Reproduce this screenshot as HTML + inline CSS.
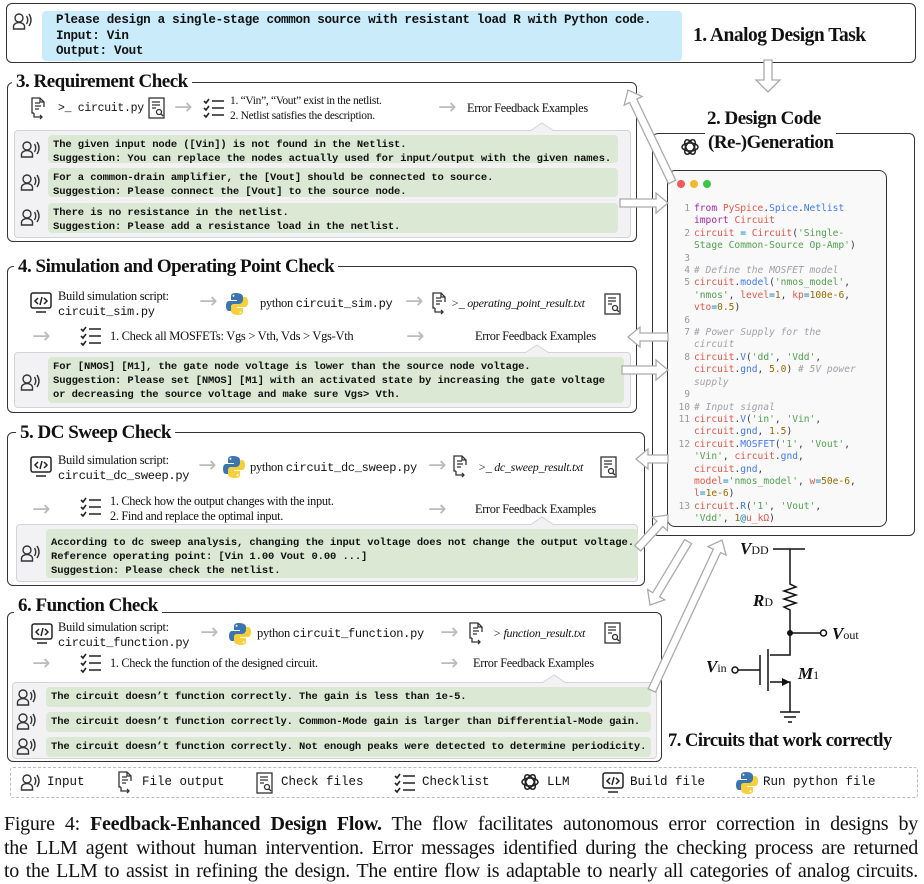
<!DOCTYPE html>
<html><head><meta charset="utf-8">
<style>
*{margin:0;padding:0;box-sizing:border-box}
body{width:924px;height:881px;background:#fff;position:relative;overflow:hidden;font-family:"Liberation Serif",serif;color:#111}
.a{position:absolute}
.box{position:absolute;border:1.3px solid #333;border-radius:6px;background:#fff}
.title{position:absolute;font-weight:bold;font-size:19px;background:#fff;padding:0 4px;letter-spacing:-0.5px;white-space:nowrap;line-height:20px}
.gray{position:absolute;background:#f2f2f4;border:1px solid #d4d4d8;border-radius:4px}
.green{position:absolute;background:#dbe8d4;border-radius:4px;font-family:"Liberation Mono",monospace;font-weight:bold;font-size:10.5px;line-height:14px;padding:3px 5px;white-space:pre;color:#111;letter-spacing:-0.1px}
.s{position:absolute;font-size:12.5px;white-space:nowrap;line-height:15px;letter-spacing:-0.3px}
.m{font-family:"Liberation Mono",monospace;font-size:12px}
.ar{position:absolute;color:#bbb;font-size:22px;line-height:20px;font-family:"DejaVu Sans",sans-serif}
.code{position:absolute;left:672px;top:203px;font-family:"DejaVu Sans Mono",monospace;font-size:9.6px;line-height:12.4px;white-space:pre;color:#383a42}
.n{color:#999;display:inline-block;width:22px;text-align:right;padding-right:4px}
.k{color:#a626a4}.r{color:#e45649}.b{color:#4078f2}.g{color:#50a14f}.o{color:#986801}.c{color:#a0a1a7;font-style:italic}.t{color:#0184bc}
.leg{position:absolute;top:775px;font-family:"Liberation Mono",monospace;font-size:12.5px;white-space:nowrap}
.cap{position:absolute;left:4px;width:914px;font-size:20px;line-height:23.5px;text-align:justify;text-align-last:justify;white-space:nowrap;letter-spacing:-0.25px}
</style></head><body>
<svg width="0" height="0" style="position:absolute">
<defs>
<g id="per" fill="none" stroke="#333" stroke-width="1.4"><circle cx="7" cy="6" r="4"/><path d="M1.5 17v-2.5a5.5 4 0 0 1 11 0V17z"/><path d="M14.5 4q2.5 4 0 8M17 2q4 6 0 12"/></g>
<g id="fo" fill="none" stroke="#333" stroke-width="1.3"><path d="M4 16H2V1h8l4 4v5"/><path d="M10 1v4h4"/><path d="M5 6h5M5 9h6M5 12h4"/><path d="M4 16v4h8M10 18l2 2-2 2"/></g>
<g id="cf" fill="none" stroke="#333" stroke-width="1.3"><rect x="1" y="1" width="15" height="20"/><path d="M4 5h8M4 8h8M4 11h4"/><circle cx="11" cy="15" r="2.5"/><path d="M13 17l2 2"/></g>
<g id="cl" fill="none" stroke="#222" stroke-width="1.6"><path d="M1 3l2 2 3-4M1 10l2 2 3-4M1 17l2 2 3-4"/><path d="M9 3h12M9 10h12M9 17h12"/></g>
<g id="bd" fill="none" stroke="#222" stroke-width="1.5"><rect x="1" y="1" width="20" height="15" rx="2"/><path d="M6 20h10"/><path d="M8 6l-3 3 3 3M14 6l3 3-3 3M12 5l-2 8"/></g>
<g id="py"><path d="M10 1c-5 0-5 2-5 4v3h6v1H3c-2 0-3 2-3 5s1 5 3 5h2v-3c0-2 2-4 4-4h5c2 0 3-1 3-3V5c0-2-2-4-7-4z" fill="#3a75b0"/><circle cx="7.5" cy="3.8" r="1" fill="#fff"/><path d="M12 23c5 0 5-2 5-4v-3h-6v-1h8c2 0 3-2 3-5s-1-5-3-5h-2v3c0 2-2 4-4 4H8c-2 0-3 1-3 3v4c0 2 2 4 7 4z" fill="#f7cf3c"/><circle cx="14.5" cy="20.2" r="1" fill="#fff"/></g>
<g id="ai" fill="none" stroke="#222" stroke-width="1.5"><ellipse cx="10" cy="10" rx="8" ry="4"/><ellipse cx="10" cy="10" rx="8" ry="4" transform="rotate(60 10 10)"/><ellipse cx="10" cy="10" rx="8" ry="4" transform="rotate(120 10 10)"/></g>
</defs></svg>

<!-- top task -->
<div class="box" style="left:6px;top:3px;width:910px;height:60px"></div>
<div class="a" style="left:42px;top:11px;width:640px;height:50px;background:#c9ebfa;border-radius:4px"></div>
<svg class="a" style="left:12px;top:12px" width="20" height="20"><use href="#per"/></svg>
<div class="a" style="left:56px;top:13px;font-family:'Liberation Mono',monospace;font-weight:bold;font-size:12.6px;line-height:15.5px;white-space:pre;letter-spacing:-0.3px">Please design a single-stage common source with resistant load R with Python code.
Input: Vin
Output: Vout</div>
<div class="a" style="left:693px;top:25px;font-weight:bold;font-size:19.5px;letter-spacing:-0.5px;white-space:nowrap">1. Analog Design Task</div>

<!-- section 3 -->
<div class="box" style="left:7px;top:82px;width:630px;height:160px"></div>
<div class="title" style="left:12px;top:72px">3. Requirement Check</div>
<svg class="a" style="left:30px;top:97px" width="18" height="24"><use href="#fo"/></svg>
<div class="s m" style="left:58px;top:101px;font-size:11.5px">&gt;_ circuit.py</div>
<svg class="a" style="left:148px;top:97px" width="18" height="23"><use href="#cf"/></svg>
<div class="ar" style="left:174px;top:98px">→</div>
<svg class="a" style="left:203px;top:98px" width="24" height="22"><use href="#cl"/></svg>
<div class="s" style="left:230px;top:94px;font-size:11.5px">1. “Vin”, “Vout” exist in the netlist.<br>2. Netlist satisfies the description.</div>
<div class="ar" style="left:438px;top:98px">→</div>
<div class="s" style="left:467px;top:101px;font-size:12.3px">Error Feedback Examples</div>
<div class="gray" style="left:14px;top:130px;width:617px;height:108px"></div>
<svg class="a" style="left:530px;top:122px" width="24" height="10"><path d="M0 9L12 1 24 9" fill="#f2f2f4" stroke="#d4d4d8"/></svg>
<svg class="a" style="left:20px;top:140px" width="20" height="20"><use href="#per"/></svg>
<div class="green" style="left:48px;top:135px;width:570px;height:28px">The given input node ([Vin]) is not found in the Netlist.
Suggestion: You can replace the nodes actually used for input/output with the given names.</div>
<svg class="a" style="left:20px;top:173px" width="20" height="20"><use href="#per"/></svg>
<div class="green" style="left:48px;top:168px;width:570px;height:29px">For a common-drain amplifier, the [Vout] should be connected to source.
Suggestion: Please connect the [Vout] to the source node.</div>
<svg class="a" style="left:20px;top:208px" width="20" height="20"><use href="#per"/></svg>
<div class="green" style="left:48px;top:203px;width:570px;height:30px">There is no resistance in the netlist.
Suggestion: Please add a resistance load in the netlist.</div>

<!-- section 4 -->
<div class="box" style="left:7px;top:266px;width:630px;height:147px"></div>
<div class="title" style="left:14px;top:257px">4. Simulation and Operating Point Check</div>
<svg class="a" style="left:30px;top:292px" width="22" height="22"><use href="#bd"/></svg>
<div class="s" style="left:58px;top:289px;font-size:12.5px">Build simulation script:<br><span class="m">circuit_sim.py</span></div>
<div class="ar" style="left:199px;top:292px">→</div>
<svg class="a" style="left:226px;top:292px" width="22" height="24"><use href="#py"/></svg>
<div class="s" style="left:260px;top:296px">python <span class="m">circuit_sim.py</span></div>
<div class="ar" style="left:405px;top:292px">→</div>
<svg class="a" style="left:431px;top:292px" width="18" height="24"><use href="#fo"/></svg>
<div class="s" style="left:451px;top:296px;font-style:italic;font-size:12px">&gt;_ operating_point_result.txt</div>
<svg class="a" style="left:604px;top:293px" width="18" height="23"><use href="#cf"/></svg>
<div class="ar" style="left:32px;top:327px">→</div>
<svg class="a" style="left:80px;top:326px" width="24" height="22"><use href="#cl"/></svg>
<div class="s" style="left:110px;top:329px">1. Check all MOSFETs: Vgs &gt; Vth, Vds &gt; Vgs-Vth</div>
<div class="ar" style="left:406px;top:327px">→</div>
<div class="s" style="left:475px;top:329px;font-size:12.3px">Error Feedback Examples</div>
<div class="gray" style="left:14px;top:352px;width:617px;height:56px"></div>
<svg class="a" style="left:525px;top:344px" width="24" height="10"><path d="M0 9L12 1 24 9" fill="#f2f2f4" stroke="#d4d4d8"/></svg>
<svg class="a" style="left:20px;top:373px" width="20" height="20"><use href="#per"/></svg>
<div class="green" style="left:48px;top:357px;width:576px;height:46px">For [NMOS] [M1], the gate node voltage is lower than the source node voltage.
Suggestion: Please set [NMOS] [M1] with an activated state by increasing the gate voltage
or decreasing the source voltage and make sure Vgs&gt; Vth.</div>

<!-- section 5 -->
<div class="box" style="left:7px;top:432px;width:638px;height:154px"></div>
<div class="title" style="left:16px;top:423px">5. DC Sweep Check</div>
<svg class="a" style="left:30px;top:456px" width="22" height="22"><use href="#bd"/></svg>
<div class="s" style="left:58px;top:453px;font-size:12.5px">Build simulation script:<br><span class="m">circuit_dc_sweep.py</span></div>
<div class="ar" style="left:198px;top:456px">→</div>
<svg class="a" style="left:223px;top:455px" width="22" height="24"><use href="#py"/></svg>
<div class="s" style="left:250px;top:460px">python <span class="m">circuit_dc_sweep.py</span></div>
<div class="ar" style="left:428px;top:456px">→</div>
<svg class="a" style="left:452px;top:455px" width="18" height="24"><use href="#fo"/></svg>
<div class="s" style="left:478px;top:460px;font-style:italic;font-size:12px">&gt;_ dc_sweep_result.txt</div>
<svg class="a" style="left:600px;top:456px" width="18" height="23"><use href="#cf"/></svg>
<div class="ar" style="left:32px;top:500px">→</div>
<svg class="a" style="left:80px;top:497px" width="24" height="22"><use href="#cl"/></svg>
<div class="s" style="left:110px;top:494px;font-size:12.3px">1. Check how the output changes with the input.<br>2. Find and replace the optimal input.</div>
<div class="ar" style="left:428px;top:500px">→</div>
<div class="s" style="left:475px;top:502px;font-size:12.3px">Error Feedback Examples</div>
<div class="gray" style="left:16px;top:524px;width:622px;height:58px"></div>
<svg class="a" style="left:530px;top:516px" width="24" height="10"><path d="M0 9L12 1 24 9" fill="#f2f2f4" stroke="#d4d4d8"/></svg>
<svg class="a" style="left:20px;top:544px" width="20" height="20"><use href="#per"/></svg>
<div class="green" style="left:46px;top:529px;width:592px;height:49px;padding-top:7px">According to dc sweep analysis, changing the input voltage does not change the output voltage.
Reference operating point: [Vin 1.00 Vout 0.00 ...]
Suggestion: Please check the netlist.</div>

<!-- section 6 -->
<div class="box" style="left:7px;top:612px;width:655px;height:150px"></div>
<div class="title" style="left:14px;top:596px">6. Function Check</div>
<svg class="a" style="left:31px;top:623px" width="22" height="22"><use href="#bd"/></svg>
<div class="s" style="left:58px;top:620px;font-size:12.5px">Build simulation script:<br><span class="m">circuit_function.py</span></div>
<div class="ar" style="left:200px;top:623px">→</div>
<svg class="a" style="left:229px;top:622px" width="22" height="24"><use href="#py"/></svg>
<div class="s" style="left:257px;top:626px">python <span class="m">circuit_function.py</span></div>
<div class="ar" style="left:440px;top:623px">→</div>
<svg class="a" style="left:468px;top:622px" width="18" height="24"><use href="#fo"/></svg>
<div class="s" style="left:493px;top:626px;font-style:italic;font-size:12px">&gt; function_result.txt</div>
<svg class="a" style="left:604px;top:622px" width="18" height="23"><use href="#cf"/></svg>
<div class="ar" style="left:32px;top:654px">→</div>
<svg class="a" style="left:80px;top:653px" width="24" height="22"><use href="#cl"/></svg>
<div class="s" style="left:110px;top:656px;font-size:12.3px">1. Check the function of the designed circuit.</div>
<div class="ar" style="left:440px;top:654px">→</div>
<div class="s" style="left:473px;top:656px;font-size:12.3px">Error Feedback Examples</div>
<div class="gray" style="left:12px;top:682px;width:645px;height:77px"></div>
<svg class="a" style="left:542px;top:674px" width="24" height="10"><path d="M0 9L12 1 24 9" fill="#f2f2f4" stroke="#d4d4d8"/></svg>
<svg class="a" style="left:16px;top:688px" width="20" height="20"><use href="#per"/></svg>
<div class="green" style="left:46px;top:687px;width:605px;height:20px">The circuit doesn’t function correctly. The gain is less than 1e-5.</div>
<svg class="a" style="left:16px;top:712px" width="20" height="20"><use href="#per"/></svg>
<div class="green" style="left:46px;top:712px;width:605px;height:20px">The circuit doesn’t function correctly. Common-Mode gain is larger than Differential-Mode gain.</div>
<svg class="a" style="left:16px;top:737px" width="20" height="20"><use href="#per"/></svg>
<div class="green" style="left:46px;top:737px;width:605px;height:20px">The circuit doesn’t function correctly. Not enough peaks were detected to determine periodicity.</div>

<!-- right design panel -->
<div class="box" style="left:652px;top:133px;width:263px;height:403px"></div>
<div class="a" style="left:707px;top:108px;font-weight:bold;font-size:19px;letter-spacing:-0.5px;white-space:nowrap">2. Design Code</div>
<div class="a" style="left:705px;top:132px;font-weight:bold;font-size:19px;letter-spacing:-0.5px;white-space:nowrap;background:#fff;padding:0 3px">(Re-)Generation</div>
<svg class="a" style="left:680px;top:137px" width="20" height="20"><use href="#ai"/></svg>
<div class="a" style="left:667px;top:170px;width:220px;height:357px;background:#f9f9f9;border:1.3px solid #333;border-radius:8px"></div>
<svg class="a" style="left:676px;top:178px" width="40" height="12"><circle cx="5" cy="6" r="4" fill="#f25a55"/><circle cx="18" cy="6" r="4" fill="#f5b731"/><circle cx="31" cy="6" r="4" fill="#3ec647"/></svg>
<div class="code"><span class="n">1</span><span class="k">from</span> <span class="r">PySpice</span>.<span class="b">Spice</span>.<span class="b">Netlist</span>
<span class="n"></span><span class="k">import</span> <span class="r">Circuit</span>
<span class="n">2</span><span class="r">circuit</span> <span class="t">=</span> <span class="r">Circuit</span>(<span class="g">'Single-</span>
<span class="n"></span><span class="g">Stage Common-Source Op-Amp'</span>)
<span class="n">3</span>
<span class="n">4</span><span class="c"># Define the MOSFET model</span>
<span class="n">5</span><span class="r">circuit</span>.<span class="b">model</span>(<span class="g">'nmos_model'</span>,
<span class="n"></span><span class="g">'nmos'</span>, <span class="r">level</span><span class="t">=</span><span class="o">1</span>, <span class="r">kp</span><span class="t">=</span><span class="o">100e-6</span>,
<span class="n"></span><span class="r">vto</span><span class="t">=</span><span class="o">0.5</span>)
<span class="n">6</span>
<span class="n">7</span><span class="c"># Power Supply for the</span>
<span class="n"></span><span class="c">circuit</span>
<span class="n">8</span><span class="r">circuit</span>.<span class="b">V</span>(<span class="g">'dd'</span>, <span class="g">'Vdd'</span>,
<span class="n"></span><span class="r">circuit</span>.<span class="b">gnd</span>, <span class="o">5.0</span>) <span class="c"># 5V power</span>
<span class="n"></span><span class="c">supply</span>
<span class="n">9</span>
<span class="n">10</span><span class="c"># Input signal</span>
<span class="n">11</span><span class="r">circuit</span>.<span class="b">V</span>(<span class="g">'in'</span>, <span class="g">'Vin'</span>,
<span class="n"></span><span class="r">circuit</span>.<span class="b">gnd</span>, <span class="o">1.5</span>)
<span class="n">12</span><span class="r">circuit</span>.<span class="b">MOSFET</span>(<span class="g">'1'</span>, <span class="g">'Vout'</span>,
<span class="n"></span><span class="g">'Vin'</span>, <span class="r">circuit</span>.<span class="b">gnd</span>,
<span class="n"></span><span class="r">circuit</span>.<span class="b">gnd</span>,
<span class="n"></span><span class="r">model</span><span class="t">=</span><span class="g">'nmos_model'</span>, <span class="r">w</span><span class="t">=</span><span class="o">50e-6</span>,
<span class="n"></span><span class="r">l</span><span class="t">=</span><span class="o">1e-6</span>)
<span class="n">13</span><span class="r">circuit</span>.<span class="b">R</span>(<span class="g">'1'</span>, <span class="g">'Vout'</span>,
<span class="n"></span><span class="g">'Vdd'</span>, <span class="o">1</span><span class="t">@</span><span class="r">u_kΩ</span>)</div>

<!-- big arrows + circuit -->
<svg class="a" style="left:0;top:0" width="924" height="881">
<g fill="#fff" stroke="#aaa" stroke-width="1.3">
<g transform="translate(756,60)"><polygon points="8,0 16,0 16,20 24,20 12,32 0,20 8,20"/></g>
<g transform="translate(628,90) rotate(-115.6)"><polygon points="-102,-4 -12,-4 -12,-10 0,0 -12,10 -12,4 -102,4" transform="scale(-1,1) rotate(180)"/></g>
<g transform="translate(668,203)"><polygon points="-48,-4 -12,-4 -12,-10 0,0 -12,10 -12,4 -48,4"/></g>
<g transform="translate(628,337) rotate(180)"><polygon points="-40,-4 -12,-4 -12,-10 0,0 -12,10 -12,4 -40,4"/></g>
<g transform="translate(668,370)"><polygon points="-46,-4 -12,-4 -12,-10 0,0 -12,10 -12,4 -46,4"/></g>
<g transform="translate(636,459) rotate(180)"><polygon points="-32,-4 -12,-4 -12,-10 0,0 -12,10 -12,4 -32,4"/></g>
<g transform="translate(668,515) rotate(-47.7)"><polygon points="-45,-4 -12,-4 -12,-10 0,0 -12,10 -12,4 -45,4"/></g>
<g transform="translate(650,605) rotate(121)"><polygon points="-74,-4 -12,-4 -12,-10 0,0 -12,10 -12,4 -74,4"/></g>
<g transform="translate(722,540) rotate(-65)"><polygon points="-166,-4 -12,-4 -12,-10 0,0 -12,10 -12,4 -166,4"/></g>
</g>
<g stroke="#111" stroke-width="1.5" fill="none">
<path d="M773 549H805M790 549V584l6 3-12 4 12 4-12 4 12 4-12 4 6 3V655H770M768 649V691M760 655V685M738 670H760M770 682H790V712M780 712H800M784 717H796M788 722H792M790 633H820"/>
<circle cx="823.5" cy="633" r="3" fill="#fff"/>
<circle cx="735" cy="670" r="3" fill="#fff"/>
</g>
<circle cx="790" cy="633" r="3" fill="#111"/>
<polygon points="782,678 790,682 782,686" fill="#111"/>
</svg>
<div class="a" style="left:740px;top:539px;font-size:17px;font-weight:bold;font-style:italic">V<span style="font-weight:normal;font-style:normal;font-size:12px">DD</span></div>
<div class="a" style="left:753px;top:591px;font-size:17px;font-weight:bold;font-style:italic">R<span style="font-weight:normal;font-style:normal;font-size:12px">D</span></div>
<div class="a" style="left:832px;top:624px;font-size:17px;font-weight:bold;font-style:italic">V<span style="font-weight:normal;font-style:normal;font-size:12px">out</span></div>
<div class="a" style="left:706px;top:657px;font-size:17px;font-weight:bold;font-style:italic">V<span style="font-weight:normal;font-style:normal;font-size:12px">in</span></div>
<div class="a" style="left:798px;top:664px;font-size:17px;font-weight:bold;font-style:italic">M<span style="font-weight:normal;font-style:normal;font-size:12px">1</span></div>
<div class="a" style="left:668px;top:731px;font-weight:bold;font-size:18.5px;letter-spacing:-0.5px;white-space:nowrap">7. Circuits that work correctly</div>

<!-- legend -->
<div class="a" style="left:10px;top:767px;width:908px;height:31px;border:1px dashed #bbb;border-radius:3px"></div>
<svg class="a" style="left:20px;top:773px" width="20" height="20"><use href="#per"/></svg><div class="leg" style="left:47px">Input</div>
<svg class="a" style="left:117px;top:771px" width="18" height="24"><use href="#fo"/></svg><div class="leg" style="left:142px">File output</div>
<svg class="a" style="left:256px;top:772px" width="18" height="23"><use href="#cf"/></svg><div class="leg" style="left:281px">Check files</div>
<svg class="a" style="left:394px;top:773px" width="24" height="22"><use href="#cl"/></svg><div class="leg" style="left:422px">Checklist</div>
<svg class="a" style="left:520px;top:772px" width="20" height="20"><use href="#ai"/></svg><div class="leg" style="left:547px">LLM</div>
<svg class="a" style="left:602px;top:772px" width="22" height="22"><use href="#bd"/></svg><div class="leg" style="left:630px">Build file</div>
<svg class="a" style="left:736px;top:771px" width="22" height="24"><use href="#py"/></svg><div class="leg" style="left:763px">Run python file</div>

<!-- caption -->
<div class="cap" style="top:813px">Figure 4: <b>Feedback-Enhanced Design Flow.</b> The flow facilitates autonomous error correction in designs by</div>
<div class="cap" style="top:837px">the LLM agent without human intervention. Error messages identified during the checking process are returned</div>
<div class="cap" style="top:860px">to the LLM to assist in refining the design. The entire flow is adaptable to nearly all categories of analog circuits.</div>
</body></html>
